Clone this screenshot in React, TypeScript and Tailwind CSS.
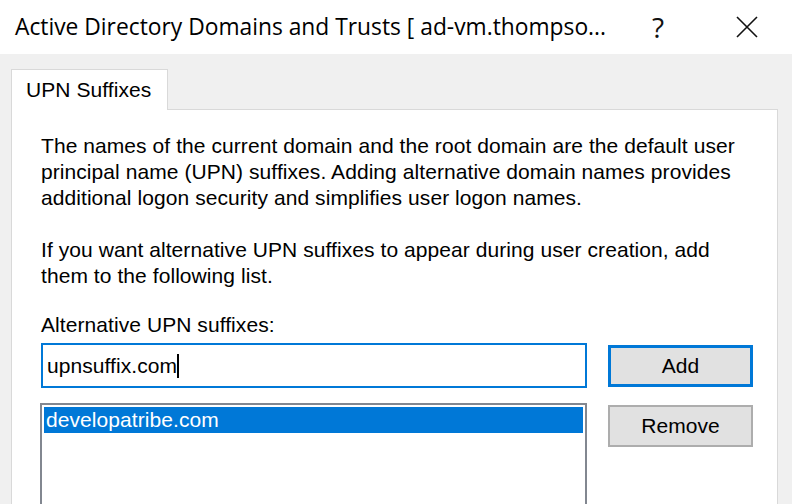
import React from 'react';

const bodyFont = { fontFamily: '"Liberation Sans", Arial, sans-serif' };

const CloseIcon = () => (
  <svg width="22" height="22" viewBox="0 0 22 22" fill="none" stroke="#111" strokeWidth="1.6">
    <path d="M1 1 L21 21 M21 1 L1 21" />
  </svg>
);

const App: React.FC = () => {
  return (
    <div className="w-[792px] h-[504px] overflow-hidden bg-[#f0f0f0] flex flex-col">
      {/* title bar */}
      <div className="h-[54px] bg-white flex items-center shrink-0">
        <div
          className="pl-[15px] text-[22.8px] text-black whitespace-nowrap w-[630px]"
          style={{ fontFamily: '"Open Sans", "Noto Sans", sans-serif' }}
        >
          Active Directory Domains and Trusts [ ad-vm.thompso...
        </div>
        <div
          className="w-[56px] text-[28px] leading-none text-[#111] text-center"
          style={{ fontFamily: '"Open Sans", sans-serif' }}
        >
          ?
        </div>
        <div className="ml-[50px] flex items-center">
          <CloseIcon />
        </div>
      </div>

      {/* tab strip */}
      <div className="pl-[11px] pt-[15px] flex flex-col flex-1 tracking-[0.07px]" style={bodyFont}>
        <div className="relative z-10 -mb-px w-[157px] h-[41px] bg-white border border-b-0 border-[#d9d9d9] flex items-center pl-[14px] text-[21px] text-black">
          UPN Suffixes
        </div>
        <div className="w-[767px] flex-1 bg-white border border-[#d9d9d9] pl-[29px] pt-[23px] text-[21px] leading-[26px] text-black">
          <p>
            The names of the current domain and the root domain are the default user
            <br />
            principal name (UPN) suffixes. Adding alternative domain names provides
            <br />
            additional logon security and simplifies user logon names.
          </p>
          <p className="mt-[26px]">
            If you want alternative UPN suffixes to appear during user creation, add
            <br />
            them to the following list.
          </p>
          <p className="mt-[23px]">Alternative UPN suffixes:</p>

          <div className="mt-[5px] grid grid-cols-[546px_145px] gap-x-[21px]">
            <div className="h-[45px] border-2 border-[#0078d7] flex items-center pl-[4px]">
              <span>upnsuffix.com</span>
              <span className="inline-block w-[2px] h-[24px] bg-black" />
            </div>
            <div className="pt-[2px]">
              <button className="w-[145px] h-[42px] bg-[#e1e1e1] border-[3px] border-[#0078d7] text-[21px] text-black">
                Add
              </button>
            </div>

            <div className="mt-[15px] -ml-px h-[120px] border-2 border-[#828790] p-[2px]">
              <div className="h-[26px] bg-[#0078d7] text-white pl-[2px] flex items-center">
                developatribe.com
              </div>
            </div>
            <div className="mt-[17px]">
              <button className="w-[145px] h-[42px] bg-[#e1e1e1] border-2 border-[#adadad] text-[21px] text-black">
                Remove
              </button>
            </div>
          </div>
        </div>
      </div>
    </div>
  );
};

export default App;
